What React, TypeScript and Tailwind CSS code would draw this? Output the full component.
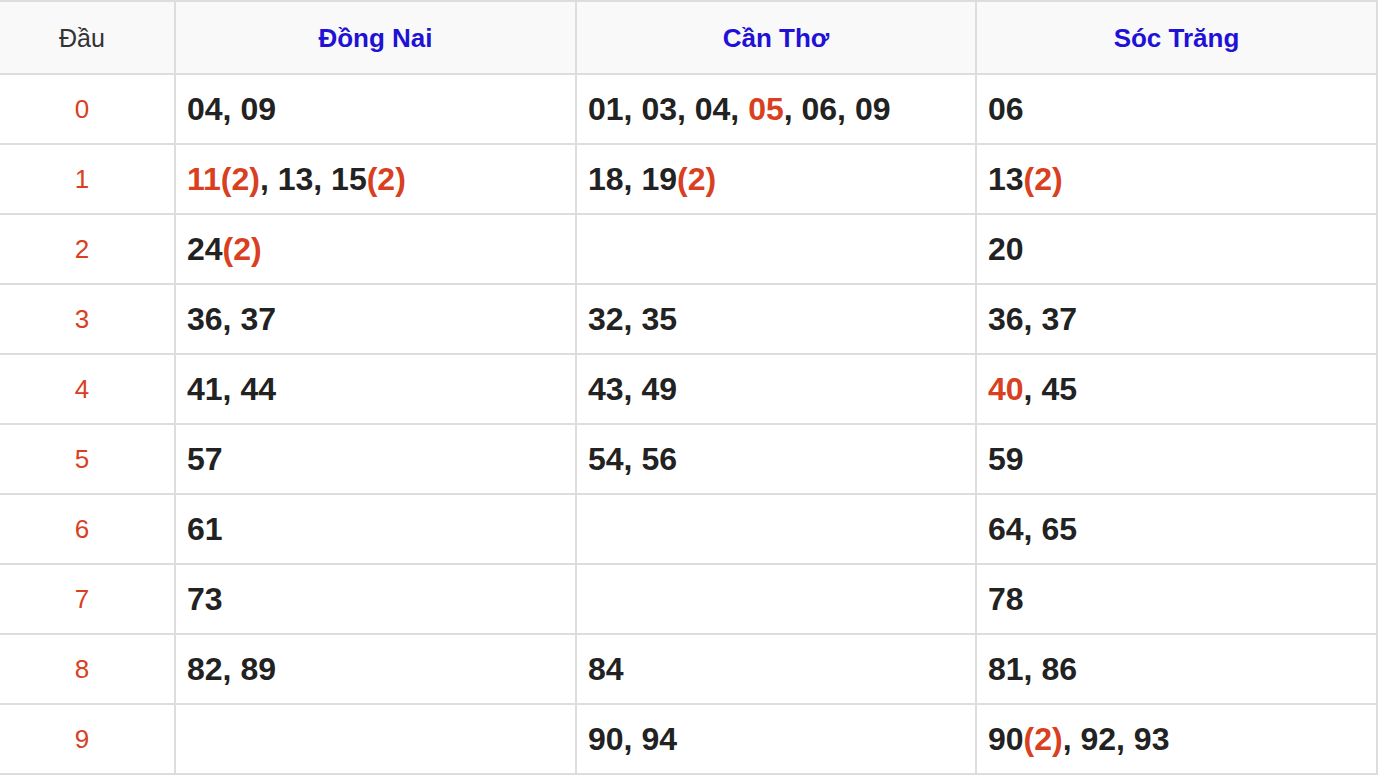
const provinces = ['Đồng Nai', 'Cần Thơ', 'Sóc Trăng'];

// each number: [value, highlighted, count]
type Num = [string, boolean?, number?];

const rows: Num[][][] = [
  [[['04'], ['09']], [['01'], ['03'], ['04'], ['05', true], ['06'], ['09']], [['06']]],
  [[['11', true, 2], ['13'], ['15', false, 2]], [['18'], ['19', false, 2]], [['13', false, 2]]],
  [[['24', false, 2]], [], [['20']]],
  [[['36'], ['37']], [['32'], ['35']], [['36'], ['37']]],
  [[['41'], ['44']], [['43'], ['49']], [['40', true], ['45']]],
  [[['57']], [['54'], ['56']], [['59']]],
  [[['61']], [], [['64'], ['65']]],
  [[['73']], [], [['78']]],
  [[['82'], ['89']], [['84']], [['81'], ['86']]],
  [[], [['90'], ['94']], [['90', false, 2], ['92'], ['93']]],
];

function Numbers({ list }: { list: Num[] }) {
  return (
    <>
      {list.map(([v, hot, count], i) => (
        <span key={i}>
          {i > 0 && ', '}
          <span className={hot ? 'text-[#d8401f]' : ''}>{v}</span>
          {count && <span className="text-[#d8401f]">({count})</span>}
        </span>
      ))}
    </>
  );
}

export default function App() {
  const widths = ['w-[176px]', 'w-[401px]', 'w-[400px]', 'w-[401px]'];
  return (
    <div className="min-h-screen bg-white font-['Liberation_Sans',Arial,sans-serif]">
      <div className="w-[1378px] border-t-2 border-[#dddddd]">
        <div className="flex h-[73px] bg-[#f9f9f9]">
          <div className="flex w-[176px] items-center justify-center border-r-2 border-b-2 border-[#dddddd] pt-[2px] pr-[10px] text-[25px] text-[#333333]">
            Đầu
          </div>
          {provinces.map((p, i) => (
            <div
              key={p}
              className={`flex ${widths[i + 1]} items-center justify-center border-r-2 border-b-2 border-[#dddddd] pt-[2px] text-[26px] font-bold text-[#1f12d6]`}
            >
              {p}
            </div>
          ))}
        </div>
        {rows.map((cells, r) => (
          <div key={r} className="flex h-[70px]">
            <div className="flex w-[176px] items-center justify-center border-r-2 border-b-2 border-[#dddddd] pr-[10px] text-[26px] text-[#d8401f]">
              {r}
            </div>
            {cells.map((list, c) => (
              <div
                key={c}
                className={`flex ${widths[c + 1]} items-center border-r-2 border-b-2 border-[#dddddd] pl-[11px] text-[32px] font-bold text-[#222222]`}
              >
                <Numbers list={list} />
              </div>
            ))}
          </div>
        ))}
      </div>
    </div>
  );
}
